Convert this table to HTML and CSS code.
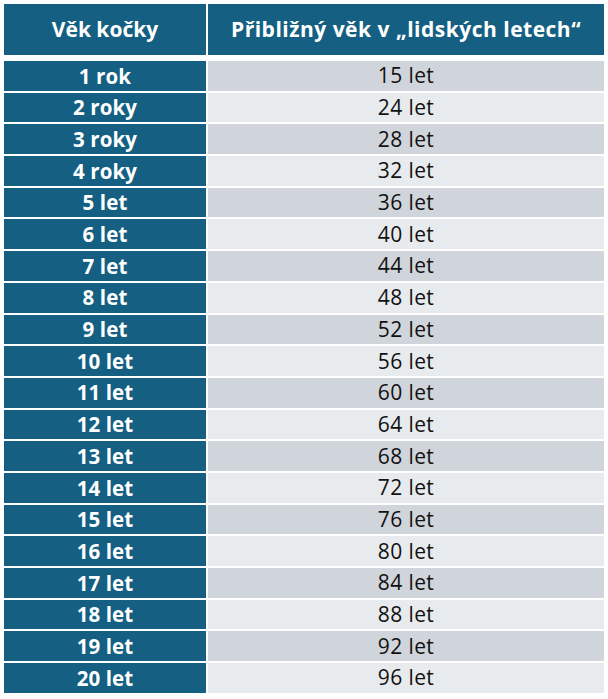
FILE: index.html
```html
<!DOCTYPE html>
<html lang="cs">
<head>
<meta charset="utf-8">
<title>Věk kočky</title>
<link rel="stylesheet" href="styles.css">
</head>
<body>
<div class="table">
  <div class="cell head">Věk kočky</div>
  <div class="cell head head-wide">Přibližný věk v „lidských letech“</div>

  <div class="cell key">1 rok</div><div class="cell val odd">15 let</div>
  <div class="cell key">2 roky</div><div class="cell val even">24 let</div>
  <div class="cell key">3 roky</div><div class="cell val odd">28 let</div>
  <div class="cell key">4 roky</div><div class="cell val even">32 let</div>
  <div class="cell key">5 let</div><div class="cell val odd">36 let</div>
  <div class="cell key">6 let</div><div class="cell val even">40 let</div>
  <div class="cell key">7 let</div><div class="cell val odd">44 let</div>
  <div class="cell key">8 let</div><div class="cell val even">48 let</div>
  <div class="cell key">9 let</div><div class="cell val odd">52 let</div>
  <div class="cell key">10 let</div><div class="cell val even">56 let</div>
  <div class="cell key">11 let</div><div class="cell val odd">60 let</div>
  <div class="cell key">12 let</div><div class="cell val even">64 let</div>
  <div class="cell key">13 let</div><div class="cell val odd">68 let</div>
  <div class="cell key">14 let</div><div class="cell val even">72 let</div>
  <div class="cell key">15 let</div><div class="cell val odd">76 let</div>
  <div class="cell key">16 let</div><div class="cell val even">80 let</div>
  <div class="cell key">17 let</div><div class="cell val odd">84 let</div>
  <div class="cell key">18 let</div><div class="cell val even">88 let</div>
  <div class="cell key">19 let</div><div class="cell val odd">92 let</div>
  <div class="cell key">20 let</div><div class="cell val even">96 let</div>
</div>
</body>
</html>
```

FILE: styles.css
```css
html, body {
  margin: 0;
  padding: 0;
  background: #ffffff;
}

body {
  padding: 4px;
  font-family: "Open Sans", "Liberation Sans", sans-serif;
}

.table {
  display: grid;
  grid-template-columns: 202px 396px;
  grid-template-rows: 55px;
  grid-auto-rows: 29.7px;
  gap: 2px;
  width: 600px;
}

.cell {
  display: flex;
  align-items: center;
  justify-content: center;
  line-height: 1;
}

.head {
  height: 51px;
  margin-bottom: 4px;
  background: #156082;
  color: #ffffff;
  font-size: 21px;
  font-weight: 700;
  padding-bottom: 1px;
  box-sizing: border-box;
}

.head-wide {
  letter-spacing: 0.5px;
}

.key {
  background: #156082;
  color: #ffffff;
  font-size: 20.5px;
  font-weight: 700;
  letter-spacing: 0.1px;
}

.val {
  color: #111111;
  font-size: 21px;
  font-weight: 400;
  letter-spacing: 0.4px;
}

.odd {
  background: #d0d5db;
}

.even {
  background: #e8ebee;
}
```
